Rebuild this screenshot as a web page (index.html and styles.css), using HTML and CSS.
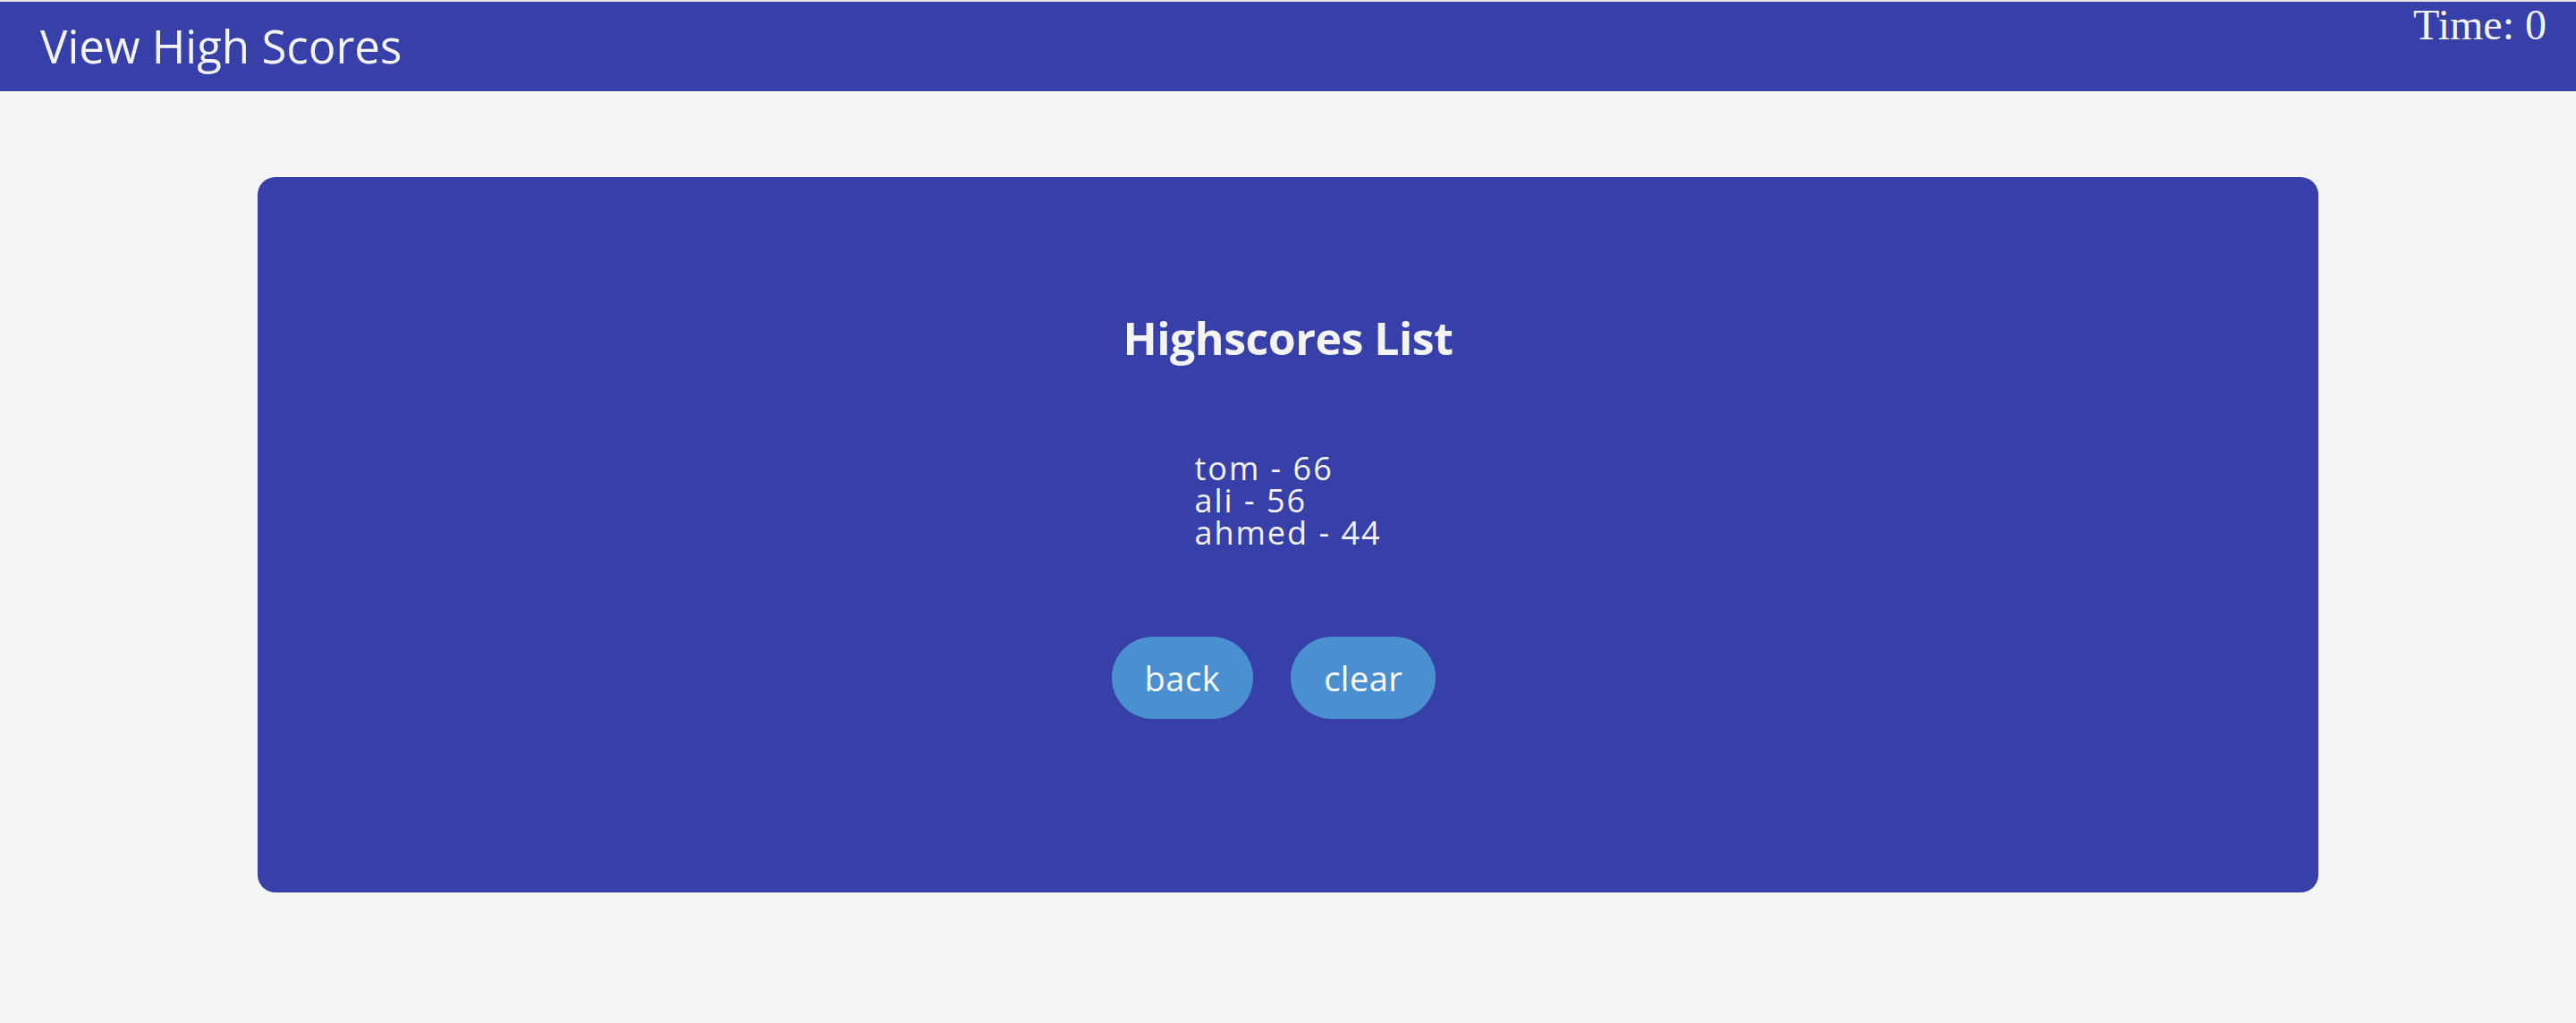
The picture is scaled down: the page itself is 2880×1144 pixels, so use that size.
FILE: index.html
```html
<!DOCTYPE html>
<html lang="en">
<head>
<meta charset="utf-8">
<title>High Scores</title>
<link rel="stylesheet" href="styles.css">
</head>
<body>
<header class="topbar">
  <a class="view-link" href="#">View High Scores</a>
  <div class="timer">Time: 0</div>
</header>
<main class="card">
  <h2 class="card-title">Highscores List</h2>
  <ol class="scores">
    <li>tom - 66</li>
    <li>ali - 56</li>
    <li>ahmed - 44</li>
  </ol>
  <div class="actions">
    <button class="btn">back</button>
    <button class="btn">clear</button>
  </div>
</main>
</body>
</html>
```
FILE: styles.css
```css
* { box-sizing: border-box; }

html, body {
  margin: 0;
  padding: 0;
}

body {
  background: #f4f4f4;
  border-top: 2px solid #e4e4e4;
  font-family: "Open Sans", "DejaVu Sans", sans-serif;
  color: #f4f4f4;
}

.topbar {
  height: 100px;
  background: #3740a8;
  display: flex;
  justify-content: space-between;
  align-items: center;
  padding: 0 33px 0 45px;
}

.view-link {
  color: #f4f4f4;
  text-decoration: none;
  font-size: 51px;
  line-height: 64px;
  margin-top: -2px;
}

.timer {
  align-self: flex-start;
  margin-top: -2px;
  font-family: "Liberation Serif", "Times New Roman", serif;
  font-size: 48px;
  line-height: 55px;
  color: #f4f4f4;
}

.card {
  width: 80%;
  height: 800px;
  margin: 96px auto 0;
  background: #3740a8;
  border-radius: 20px;
  display: flex;
  flex-direction: column;
  align-items: center;
  padding-top: 148px;
}

.card-title {
  margin: 0;
  font-size: 50px;
  line-height: 64px;
  font-weight: 700;
  letter-spacing: -0.5px;
}

.scores {
  list-style: none;
  margin: 96px 0 0;
  padding: 0;
  font-size: 36px;
  line-height: 36px;
  letter-spacing: 2px;
  text-align: left;
}

.actions {
  display: flex;
  gap: 42px;
  margin-top: 98px;
  padding-right: 32px;
}

.btn {
  height: 92px;
  padding: 0 37px;
  border: none;
  border-radius: 46px;
  background: #4a90d0;
  color: #ffffff;
  font-family: "Open Sans", "DejaVu Sans", sans-serif;
  font-size: 38px;
  letter-spacing: 0.5px;
  line-height: 1;
}
```
